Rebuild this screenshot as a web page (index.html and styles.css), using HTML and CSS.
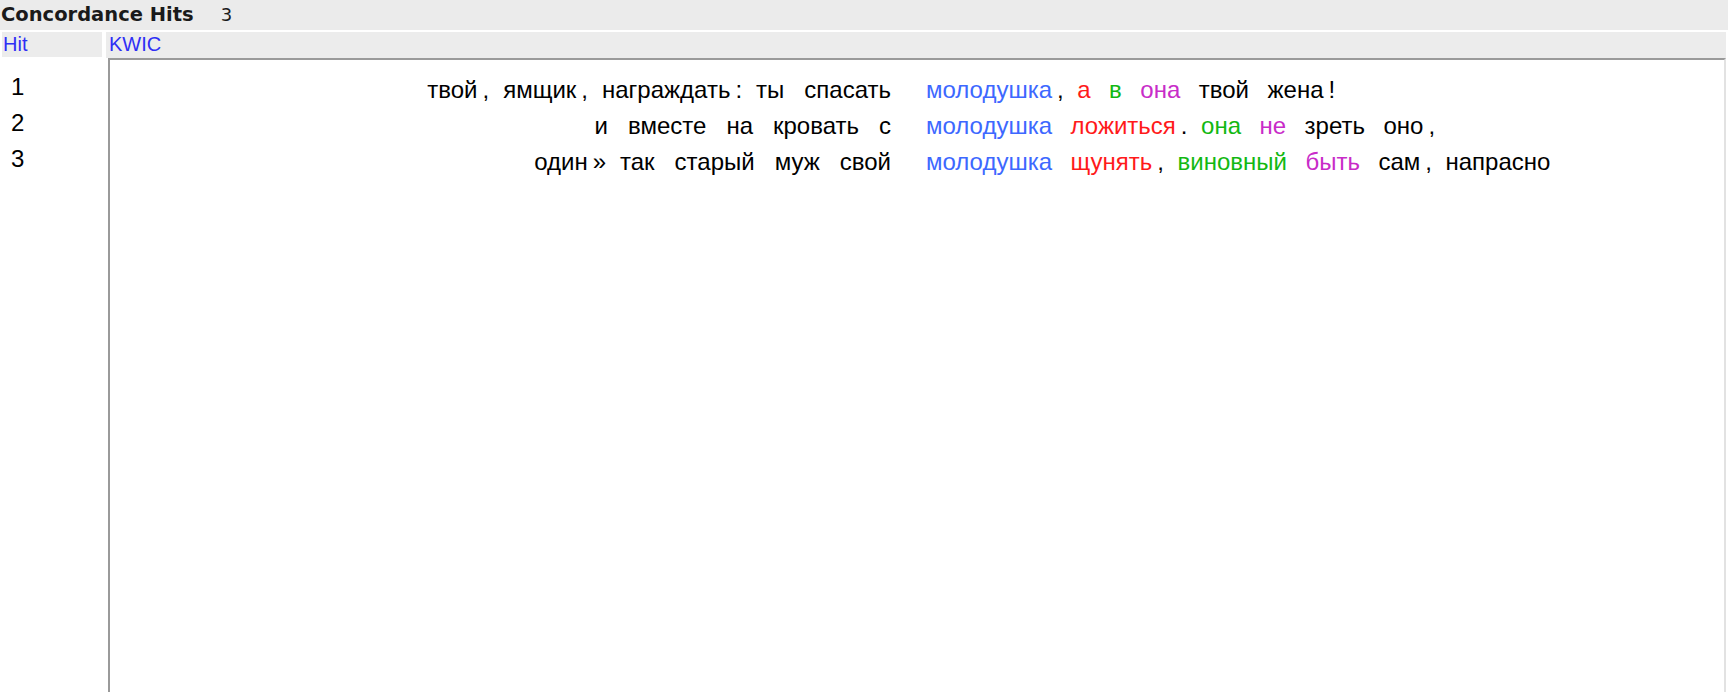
FILE: index.html
```html
<!DOCTYPE html>
<html lang="ru">
<head>
<meta charset="utf-8">
<title>Concordance Hits</title>
<link rel="stylesheet" href="styles.css">
</head>
<body>
<div class="app">
  <div class="titlebar"><span class="title">Concordance Hits</span><span class="count">3</span></div>
  <div class="table">
    <div class="col-hit">
      <div class="head hit-head">Hit</div>
      <div class="hit-body">
        <div class="hit-row">1</div>
        <div class="hit-row">2</div>
        <div class="hit-row">3</div>
      </div>
    </div>
    <div class="col-kwic">
      <div class="head kwic-head">KWIC</div>
      <div class="kwic-body">
        <div class="kwic-row">
          <div class="left"><span class="t">твой</span><span class="t p">,</span><span class="t">ямщик</span><span class="t p">,</span><span class="t">награждать</span><span class="t p">:</span><span class="t">ты</span><span class="t">спасать</span></div>
          <div class="node">молодушка</div>
          <div class="right"><span class="t p">,</span><span class="t red">а</span><span class="t green">в</span><span class="t magenta">она</span><span class="t">твой</span><span class="t">жена</span><span class="t p">!</span></div>
        </div>
        <div class="kwic-row">
          <div class="left"><span class="t">и</span><span class="t">вместе</span><span class="t">на</span><span class="t">кровать</span><span class="t">с</span></div>
          <div class="node">молодушка</div>
          <div class="right"><span class="t red">ложиться</span><span class="t p">.</span><span class="t green">она</span><span class="t magenta">не</span><span class="t">зреть</span><span class="t">оно</span><span class="t p">,</span></div>
        </div>
        <div class="kwic-row">
          <div class="left"><span class="t">один</span><span class="t p">»</span><span class="t">так</span><span class="t">старый</span><span class="t">муж</span><span class="t">свой</span></div>
          <div class="node">молодушка</div>
          <div class="right"><span class="t red">щунять</span><span class="t p">,</span><span class="t green">виновный</span><span class="t magenta">быть</span><span class="t">сам</span><span class="t p">,</span><span class="t">напрасно</span></div>
        </div>
      </div>
    </div>
  </div>
</div>
</body>
</html>
```

FILE: styles.css
```css
html, body {
  margin: 0;
  padding: 0;
  background: #ffffff;
  overflow: hidden;
}

.app {
  width: 1728px;
  height: 692px;
  font-family: "Liberation Sans", Arial, sans-serif;
  color: #000;
}

.titlebar {
  height: 30px;
  background: #ebebeb;
  display: flex;
  align-items: baseline;
  line-height: 30px;
  padding-left: 1px;
  margin-bottom: 2px;
}

.title {
  font-family: "DejaVu Sans", sans-serif;
  font-weight: bold;
  font-size: 19.5px;
  color: #1a1a1a;
}

.count {
  font-family: "DejaVu Sans", sans-serif;
  font-size: 18px;
  margin-left: 27px;
  color: #1a1a1a;
}

.table {
  display: flex;
}

.col-hit {
  width: 106px;
  flex: none;
}

.col-kwic {
  width: 1620px;
  flex: none;
}

.head {
  height: 25px;
  line-height: 25px;
  background: #ececec;
  color: #2f2ff5;
  font-size: 20px;
}

.hit-head {
  margin-left: 2px;
  width: 100px;
  padding-left: 1px;
  box-sizing: border-box;
  margin-bottom: 1px;
}

.kwic-head {
  height: 26px;
  padding-left: 3px;
}

.hit-body {
  padding-top: 11px;
  padding-left: 11px;
}

.hit-row {
  height: 36px;
  line-height: 36px;
  font-size: 24px;
}

.kwic-body {
  margin-left: 2px;
  border-left: 2px solid #9a9a9a;
  border-top: 2px solid #9a9a9a;
  border-right: 2px solid #e2e2e2;
  height: 660px;
  padding-top: 12px;
  box-sizing: border-box;
}

.kwic-row {
  display: flex;
  height: 36px;
  line-height: 36px;
  font-size: 24px;
  white-space: nowrap;
}

.left {
  width: 781px;
  flex: none;
  display: flex;
  justify-content: flex-end;
}

.node {
  margin-left: 35px;
  color: #3d68ff;
  flex: none;
}

.right {
  display: flex;
}

.t {
  margin-left: 20px;
}

.t.p {
  margin-left: 5px;
}

.t.p + .t:not(.p) {
  margin-left: 14px;
}

.left .t:first-child {
  margin-left: 0;
}

.right .t {
  margin-left: 18.5px;
}

.right .t.p {
  margin-left: 5px;
}

.right .t.p + .t:not(.p) {
  margin-left: 13.5px;
}

.red {
  color: #ff1a1a;
}

.green {
  color: #12b812;
}

.magenta {
  color: #c82cc8;
}
```
